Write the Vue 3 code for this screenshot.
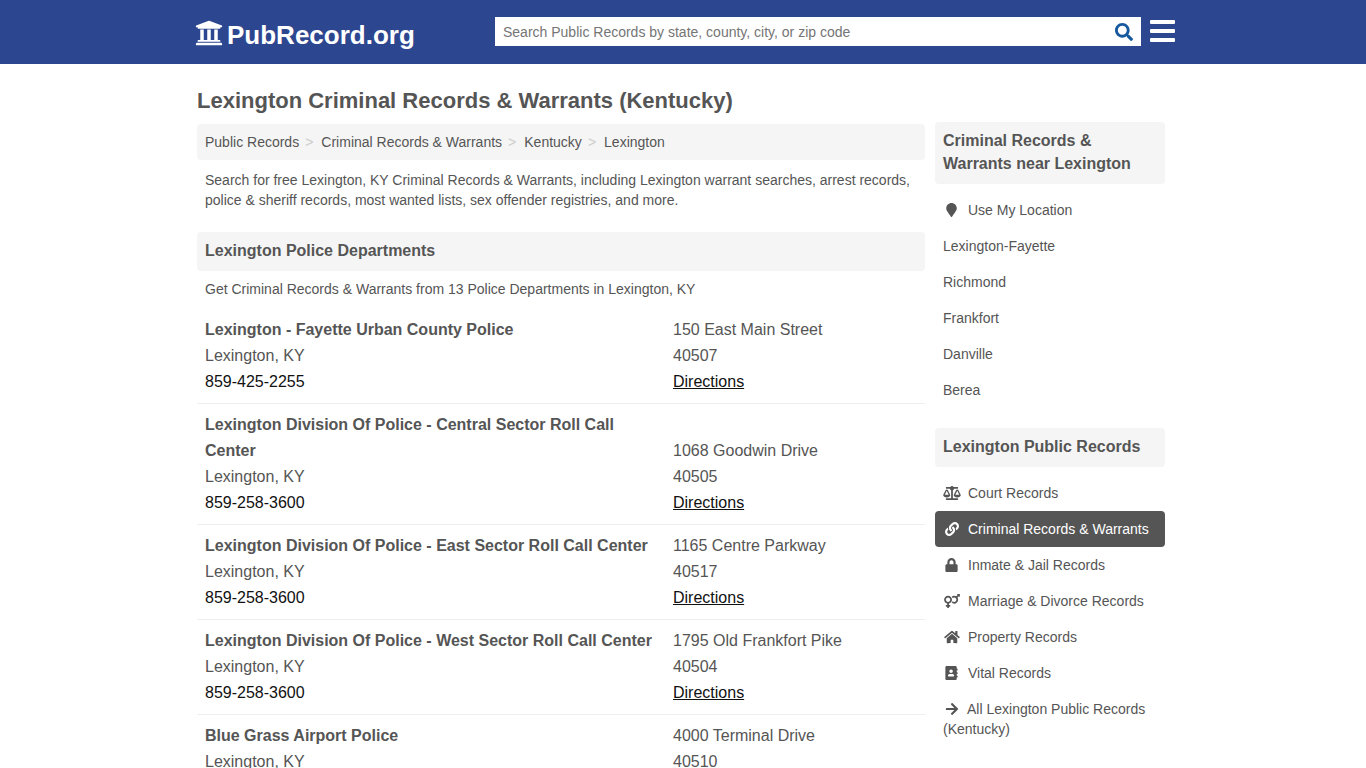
<template>
  <div class="page">
    <header class="topbar">
      <a class="logo" href="#">
        <svg class="logo-icon" viewBox="0 0 512 512"><path :d="icons.university" /></svg>
        <span class="logo-text">PubRecord.org</span>
      </a>
      <form class="search" @submit.prevent>
        <input type="text" placeholder="Search Public Records by state, county, city, or zip code" />
        <svg class="search-icon" viewBox="0 0 512 512"><path :d="icons.search" /></svg>
      </form>
      <button type="button" class="menu-btn" aria-label="Menu">
        <span></span><span></span><span></span>
      </button>
    </header>

    <div class="wrap">
      <h1>Lexington Criminal Records &amp; Warrants (Kentucky)</h1>
      <div class="columns">
        <main class="main-col">
          <nav class="crumbs">
            <template v-for="(c, i) in crumbs" :key="c">
              <a href="#">{{ c }}</a>
              <span v-if="i < crumbs.length - 1" class="crumb-sep">&gt;</span>
            </template>
          </nav>
          <p class="intro">
            Search for free Lexington, KY Criminal Records &amp; Warrants, including Lexington warrant searches, arrest records, police &amp; sheriff records, most wanted lists, sex offender registries, and more.
          </p>
          <h2 class="section-title">Lexington Police Departments</h2>
          <p class="section-note">Get Criminal Records &amp; Warrants from 13 Police Departments in Lexington, KY</p>
          <div v-for="d in departments" :key="d.name" class="dept">
            <div class="dept-left">
              <div class="dept-name">{{ d.name }}</div>
              <div>{{ d.city }}</div>
              <div class="dept-phone">{{ d.phone }}</div>
            </div>
            <div class="dept-right">
              <div>{{ d.street }}</div>
              <div>{{ d.zip }}</div>
              <a class="dept-link" href="#">Directions</a>
            </div>
          </div>
        </main>

        <aside class="side-col">
          <h3 class="side-title side-first">Criminal Records &amp; Warrants near Lexington</h3>
          <ul class="side-list">
            <li>
              <a href="#">
                <span class="side-icon"><svg class="ic-marker" viewBox="0 0 384 512"><path :d="icons.marker" /></svg></span>Use My Location
              </a>
            </li>
            <li v-for="n in nearby" :key="n"><a href="#">{{ n }}</a></li>
          </ul>
          <h3 class="side-title">Lexington Public Records</h3>
          <ul class="side-list side-list-2">
            <li v-for="r in records" :key="r.label">
              <a href="#" :class="{ active: r.active }">
                <span class="side-icon"><svg :class="r.cls" :viewBox="r.box"><path :d="r.path" /></svg></span>{{ r.label }}
              </a>
            </li>
            <li>
              <a href="#">
                <svg class="ic-arrow" viewBox="0 0 448 512"><path :d="icons.arrow" /></svg>All Lexington Public Records (Kentucky)
              </a>
            </li>
          </ul>
        </aside>
      </div>
    </div>
  </div>
</template>

<script setup>
const icons = {
  university: 'M496 128v16a8 8 0 0 1-8 8h-24v12c0 6.627-5.373 12-12 12H60c-6.627 0-12-5.373-12-12v-12H24a8 8 0 0 1-8-8v-16a8 8 0 0 1 4.941-7.392l232-88a7.996 7.996 0 0 1 6.118 0l232 88A8 8 0 0 1 496 128zm-24 304H40c-13.255 0-24 10.745-24 24v16a8 8 0 0 0 8 8h464a8 8 0 0 0 8-8v-16c0-13.255-10.745-24-24-24zM96 192v192H60c-6.627 0-12 5.373-12 12v20h416v-20c0-6.627-5.373-12-12-12h-36V192h-64v192h-64V192h-64v192h-64V192H96z',
  search: 'M505 442.7L405.3 343c-4.5-4.5-10.6-7-17-7H372c27.6-35.3 44-79.7 44-128C416 93.1 322.9 0 208 0S0 93.1 0 208s93.1 208 208 208c48.3 0 92.7-16.4 128-44v16.3c0 6.4 2.5 12.5 7 17l99.7 99.7c9.4 9.4 24.6 9.4 33.9 0l28.3-28.3c9.4-9.4 9.4-24.6.1-34zM208 336c-70.7 0-128-57.2-128-128 0-70.7 57.2-128 128-128 70.7 0 128 57.2 128 128 0 70.7-57.2 128-128 128z',
  marker: 'M172.268 501.67C26.97 291.031 0 269.413 0 192 0 85.961 85.961 0 192 0s192 85.961 192 192c0 77.413-26.97 99.031-172.268 309.67-9.535 13.774-29.93 13.773-39.464 0z',
  arrow: 'M190.5 66.9l22.2-22.2c9.4-9.4 24.6-9.4 33.9 0L441 239c9.4 9.4 9.4 24.6 0 33.9L246.6 467.3c-9.4 9.4-24.6 9.4-33.9 0l-22.2-22.2c-9.5-9.5-9.3-25 .4-34.3L311.4 296H24c-13.3 0-24-10.7-24-24v-32c0-13.3 10.7-24 24-24h287.4L190.9 101.2c-9.8-9.3-10-24.8-.4-34.3z',
}

const crumbs = ['Public Records', 'Criminal Records & Warrants', 'Kentucky', 'Lexington']
const nearby = ['Lexington-Fayette', 'Richmond', 'Frankfort', 'Danville', 'Berea']

const departments = [
  { name: 'Lexington - Fayette Urban County Police', city: 'Lexington, KY', phone: '859-425-2255', street: '150 East Main Street', zip: '40507' },
  { name: 'Lexington Division Of Police - Central Sector Roll Call Center', city: 'Lexington, KY', phone: '859-258-3600', street: '1068 Goodwin Drive', zip: '40505' },
  { name: 'Lexington Division Of Police - East Sector Roll Call Center', city: 'Lexington, KY', phone: '859-258-3600', street: '1165 Centre Parkway', zip: '40517' },
  { name: 'Lexington Division Of Police - West Sector Roll Call Center', city: 'Lexington, KY', phone: '859-258-3600', street: '1795 Old Frankfort Pike', zip: '40504' },
  { name: 'Blue Grass Airport Police', city: 'Lexington, KY', phone: '859-425-3114', street: '4000 Terminal Drive', zip: '40510' },
]

const records = [
  {
    label: 'Court Records',
    cls: 'ic-scale',
    box: '0 0 640 512',
    path: 'M256 336h-.02c0-16.18 1.34-8.73-85.05-181.51-17.65-35.29-68.19-35.36-85.87 0C-2.06 328.75.02 320.33.02 336H0c0 44.18 57.31 80 128 80s128-35.82 128-80zM128 176l72 144H56l72-144zm511.98 160c0-16.18 1.34-8.73-85.05-181.51-17.65-35.29-68.19-35.36-85.87 0-87.12 174.26-85.04 165.84-85.04 181.51H384c0 44.18 57.31 80 128 80s128-35.82 128-80h-.02zM440 320l72-144 72 144H440zm88 128H352V153.25c23.51-10.29 41.16-31.48 46.39-57.25H528c8.84 0 16-7.16 16-16V48c0-8.84-7.16-16-16-16H383.64C369.04 12.68 346.09 0 320 0s-49.04 12.68-63.64 32H112c-8.84 0-16 7.16-16 16v32c0 8.84 7.16 16 16 16h129.61c5.23 25.76 22.87 46.96 46.39 57.25V448H112c-8.84 0-16 7.16-16 16v32c0 8.84 7.16 16 16 16h416c8.84 0 16-7.16 16-16v-32c0-8.84-7.16-16-16-16z',
  },
  {
    label: 'Criminal Records & Warrants',
    active: true,
    cls: 'ic-link',
    box: '0 0 512 512',
    path: 'M326.612 185.391c59.747 59.809 58.927 155.698.36 214.59-.11.12-.24.25-.36.37l-67.2 67.2c-59.27 59.27-155.699 59.262-214.96 0-59.27-59.26-59.27-155.7 0-214.96l37.106-37.106c9.84-9.84 26.786-3.3 27.294 10.606.648 17.722 3.826 35.527 9.69 52.721 1.986 5.822.567 12.262-3.783 16.612l-13.087 13.087c-28.026 28.026-28.905 73.66-1.155 101.96 28.024 28.579 74.086 28.749 102.325.51l67.2-67.19c28.191-28.191 28.073-73.757 0-101.83-3.701-3.694-7.429-6.564-10.341-8.569a16.037 16.037 0 0 1-6.947-12.606c-.396-10.567 3.348-21.456 11.698-29.806l21.054-21.055c5.521-5.521 14.182-6.199 20.584-1.731a152.482 152.482 0 0 1 20.522 17.197zM467.547 44.449c-59.261-59.262-155.69-59.27-214.96 0l-67.2 67.2c-.12.12-.25.25-.36.37-58.566 58.892-59.387 154.781.36 214.59a152.454 152.454 0 0 0 20.521 17.196c6.402 4.468 15.064 3.789 20.584-1.731l21.054-21.055c8.35-8.35 12.094-19.239 11.698-29.806a16.037 16.037 0 0 0-6.947-12.606c-2.912-2.005-6.64-4.875-10.341-8.569-28.073-28.073-28.191-73.639 0-101.83l67.2-67.19c28.239-28.239 74.3-28.069 102.325.51 27.75 28.3 26.872 73.934-1.155 101.96l-13.087 13.087c-4.35 4.35-5.769 10.79-3.783 16.612 5.864 17.194 9.042 34.999 9.69 52.721.509 13.906 17.454 20.446 27.294 10.606l37.106-37.106c59.271-59.259 59.271-155.699.001-214.959z',
  },
  {
    label: 'Inmate & Jail Records',
    cls: 'ic-lock',
    box: '0 0 448 512',
    path: 'M400 224h-24v-72C376 68.2 307.8 0 224 0S72 68.2 72 152v72H48c-26.5 0-48 21.5-48 48v192c0 26.5 21.5 48 48 48h352c26.5 0 48-21.5 48-48V272c0-26.5-21.5-48-48-48zm-104 0H152v-72c0-39.7 32.3-72 72-72s72 32.3 72 72v72z',
  },
  {
    label: 'Marriage & Divorce Records',
    cls: 'ic-venus',
    box: '0 0 576 512',
    path: 'M564 0h-79c-10.7 0-16 12.9-8.5 20.5l16.9 16.9-48.7 48.7C422.5 72.1 396.2 64 368 64c-33.7 0-64.6 11.6-89.2 30.9 14 16.7 25 36 32.1 57.1 14.5-14.8 34.7-24 57.1-24 44.1 0 80 35.9 80 80s-35.9 80-80 80c-22.3 0-42.6-9.2-57.1-24-7.1 21.1-18 40.4-32.1 57.1 24.5 19.4 55.5 30.9 89.2 30.9 79.5 0 144-64.5 144-144 0-28.2-8.1-54.5-22.1-76.7l48.7-48.7 16.9 16.9c2.4 2.4 5.4 3.5 8.4 3.5 6.2 0 12.1-4.8 12.1-12V12c0-6.6-5.4-12-12-12zM144 64C64.5 64 0 128.5 0 208c0 68.5 47.9 125.9 112 140.4V400H76c-6.6 0-12 5.4-12 12v40c0 6.6 5.4 12 12 12h36v36c0 6.6 5.4 12 12 12h40c6.6 0 12-5.4 12-12v-36h36c6.6 0 12-5.4 12-12v-40c0-6.6-5.4-12-12-12h-36v-51.6c64.1-14.6 112-71.9 112-140.4 0-79.5-64.5-144-144-144zm0 224c-44.1 0-80-35.9-80-80s35.9-80 80-80 80 35.9 80 80-35.9 80-80 80z',
  },
  {
    label: 'Property Records',
    cls: 'ic-home',
    box: '0 0 576 512',
    path: 'M280.37 148.26L96 300.11V464a16 16 0 0 0 16 16l112.06-.29a16 16 0 0 0 15.92-16V368a16 16 0 0 1 16-16h64a16 16 0 0 1 16 16v95.64a16 16 0 0 0 16 16.05L464 480a16 16 0 0 0 16-16V300L295.67 148.26a12.19 12.19 0 0 0-15.3 0zM571.6 251.47L488 182.56V44.05a12 12 0 0 0-12-12h-56a12 12 0 0 0-12 12v72.61L318.47 43a48 48 0 0 0-61 0L4.34 251.47a12 12 0 0 0-1.6 16.9l25.5 31A12 12 0 0 0 45.15 301l235.22-193.74a12.19 12.19 0 0 1 15.3 0L530.9 301a12 12 0 0 0 16.9-1.6l25.5-31a12 12 0 0 0-1.7-16.93z',
  },
  {
    label: 'Vital Records',
    cls: 'ic-book',
    box: '0 0 448 512',
    path: 'M436 160c6.6 0 12-5.4 12-12v-40c0-6.6-5.4-12-12-12h-20V48c0-26.5-21.5-48-48-48H48C21.5 0 0 21.5 0 48v416c0 26.5 21.5 48 48 48h320c26.5 0 48-21.5 48-48v-48h20c6.6 0 12-5.4 12-12v-40c0-6.6-5.4-12-12-12h-20v-64h20c6.6 0 12-5.4 12-12v-40c0-6.6-5.4-12-12-12h-20v-64h20zm-228-32c35.3 0 64 28.7 64 64s-28.7 64-64 64-64-28.7-64-64 28.7-64 64-64zm112 236.8c0 10.6-10 19.2-22.4 19.2H118.4C106 384 96 375.4 96 364.8v-19.2c0-31.8 30.1-57.6 67.2-57.6h5c12.3 5.1 25.7 8 39.8 8s27.6-2.9 39.8-8h5c37.1 0 67.2 25.8 67.2 57.6v19.2z',
  },
]
</script>

<style>
html,
body {
  margin: 0;
  overflow: hidden;
  background: #fff;
}
</style>

<style scoped>
.page {
  height: 768px;
  overflow: hidden;
  font-family: "Liberation Sans", Arial, sans-serif;
  color: #555;
  font-size: 14px;
}

.topbar {
  height: 64px;
  background: #2d4690;
  display: flex;
  align-items: center;
  padding-left: 195px;
}

.logo {
  width: 300px;
  display: flex;
  align-items: center;
  color: #fff;
  text-decoration: none;
  font-size: 26px;
  font-weight: bold;
  height: 40px;
  margin-top: 5px;
}

.logo-icon {
  width: 28px;
  height: 28px;
  fill: #fff;
  margin-right: 4px;
  margin-top: -4px;
}

.logo-text {
  padding-top: 2px;
}

.search {
  width: 646px;
  height: 29px;
  background: #fff;
  display: flex;
  align-items: center;
  margin-top: -1px;
}

.search input {
  flex: 1;
  height: 100%;
  border: 0;
  outline: 0;
  padding: 0 8px;
  font-family: inherit;
  font-size: 14px;
  background: transparent;
  min-width: 0;
}

.search input::placeholder {
  color: #757575;
  opacity: 1;
}

.search-icon {
  width: 18px;
  height: 18px;
  fill: #15589e;
  margin-right: 8px;
}

.menu-btn {
  width: 25px;
  height: 22px;
  margin-left: 9px;
  margin-top: -2px;
  padding: 0;
  border: 0;
  background: none;
  display: flex;
  flex-direction: column;
  justify-content: space-between;
}

.menu-btn span {
  display: block;
  height: 4px;
  background: #fff;
  border-radius: 1px;
}

.wrap {
  width: 968px;
  margin-left: 197px;
}

h1 {
  margin: 0;
  padding-top: 24px;
  height: 34px;
  font-size: 22px;
  line-height: 26px;
  font-weight: bold;
  color: #555;
}

.columns {
  display: flex;
  gap: 10px;
  align-items: flex-start;
}

.main-col {
  width: 728px;
  padding-top: 2px;
}

.crumbs {
  height: 36px;
  background: #f5f5f5;
  border-radius: 4px;
  padding: 0 8px;
  display: flex;
  align-items: center;
}

.crumbs a {
  color: #555;
  text-decoration: none;
}

.crumb-sep {
  color: #ccc;
  margin: 0 8px 0 6px;
}

.intro {
  margin: 10px 0 22px;
  padding: 0 8px;
  line-height: 20px;
}

.section-title {
  margin: 0;
  height: 39px;
  padding: 0 8px;
  background: #f5f5f5;
  border-radius: 4px;
  font-size: 16px;
  line-height: 37px;
  font-weight: bold;
}

.section-note {
  margin: 8px 0 10px;
  padding: 0 8px;
  line-height: 20px;
}

.dept {
  display: grid;
  grid-template-columns: 468px 260px;
  padding: 8px 0;
  border-bottom: 1px solid #eee;
  font-size: 16px;
  line-height: 26px;
}

.dept-left,
.dept-right {
  padding: 0 8px;
}

.dept-right {
  align-self: end;
}

.dept-name {
  font-weight: bold;
}

.dept-phone {
  color: #111;
}

.dept-link {
  color: #111;
  text-decoration: underline;
}

.side-col {
  width: 230px;
}

.side-title {
  margin: 0;
  padding: 7px 8px 9px;
  background: #f5f5f5;
  border-radius: 4px;
  font-size: 16px;
  line-height: 23px;
  font-weight: bold;
}

.side-list {
  list-style: none;
  margin: 0;
  padding: 8px 0 20px;
}

.side-list-2 {
  padding-top: 8px;
}

.side-list a {
  display: block;
  padding: 8px;
  line-height: 20px;
  color: #555;
  text-decoration: none;
  border-radius: 4px;
}

.side-list a.active {
  background: #555;
  color: #fff;
}

.side-icon {
  display: inline-flex;
  width: 25px;
  height: 20px;
  vertical-align: top;
  align-items: center;
}

.side-icon svg {
  fill: currentColor;
  height: 14px;
  width: 18px;
}

.side-icon svg.ic-marker {
  width: 11px;
  margin-left: 3px;
}

.side-icon svg.ic-link {
  width: 14px;
  margin-left: 2px;
}

.side-icon svg.ic-lock,
.side-icon svg.ic-book {
  width: 13px;
  margin-left: 2px;
}

.ic-arrow {
  fill: currentColor;
  width: 14px;
  height: 14px;
  margin: 0 8px 0 2px;
  vertical-align: -2px;
}
</style>
